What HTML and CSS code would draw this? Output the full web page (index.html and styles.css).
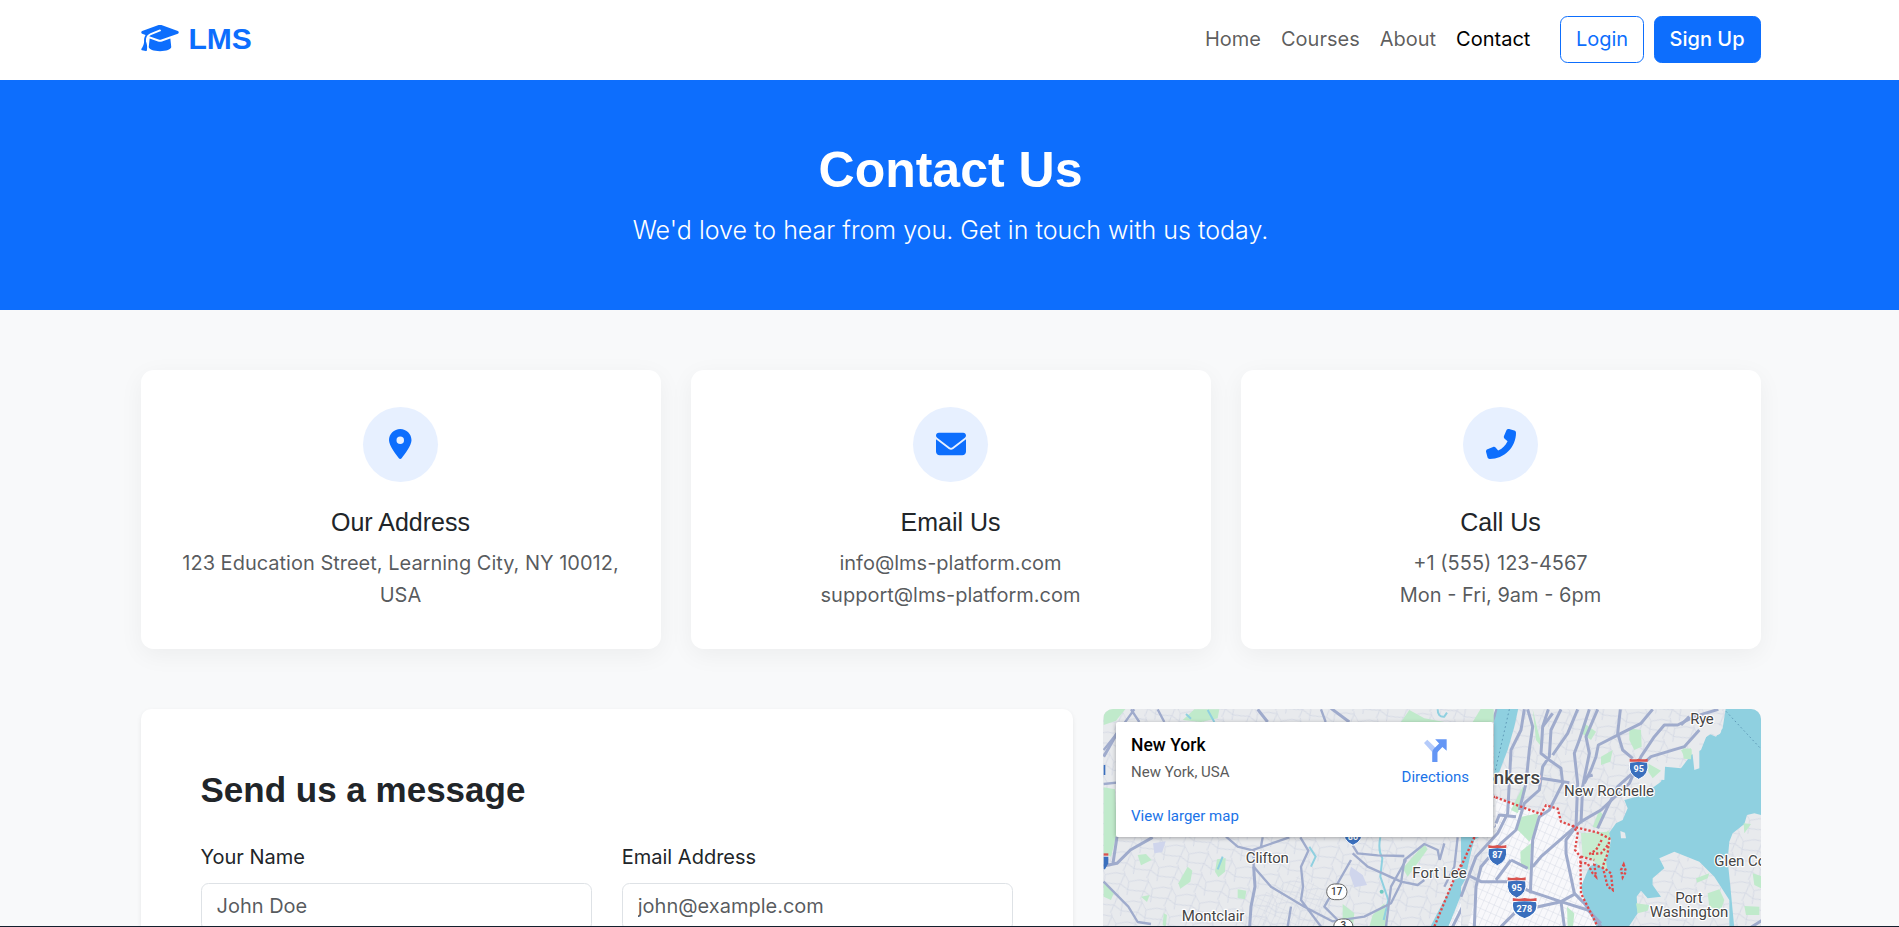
FILE: index.html
```html
<!DOCTYPE html>
<html lang="en">
<head>
<meta charset="utf-8">
<title>Contact Us - LMS</title>
<link rel="stylesheet" href="styles.css">
</head>
<body>
<header class="navbar">
  <div class="container navbar-inner">
    <a class="brand" href="#">
      <svg class="brand-icon" viewBox="0 0 640 512"><path d="M320 32c-8.1 0-16.1 1.4-23.7 4.1L15.8 137.4C6.3 140.9 0 149.9 0 160s6.3 19.1 15.8 22.6l57.9 20.9C57.3 229.3 48 259.8 48 291.9V320c0 28.4-10.8 57.7-22.3 80.8c-6.5 13-13.9 25.8-22.5 37.6C0 442.7-.9 448.3 .9 453.4s6 8.9 11.2 10.2l64 16c4.2 1.1 8.7 .3 12.4-2s6.3-6.1 7.1-10.4c8.6-42.8 4.3-81.2-2.1-108.7C90.3 344.3 86 329.8 80 316.5V291.9c0-30.2 10.2-58.7 27.9-81.5c12.9-15.5 29.6-28 49.2-35.7l157-61.7c8.2-3.2 17.5 .8 20.7 9s-.8 17.5-9 20.7l-157 61.7c-12.4 4.9-23.3 12.4-32.2 21.6l159.6 57.6c7.6 2.7 15.6 4.1 23.7 4.1s16.1-1.4 23.7-4.1L624.2 182.6c9.5-3.4 15.8-12.5 15.8-22.6s-6.3-19.1-15.8-22.6L343.7 36.1C336.1 33.4 328.1 32 320 32zM128 408c0 35.3 86 72 192 72s192-36.7 192-72L496.7 262.6 354.5 314c-11.1 4-22.8 6-34.5 6s-23.5-2-34.5-6L143.3 262.6 128 408z"/></svg>
      <span>LMS</span>
    </a>
    <nav class="nav-links">
      <a href="#">Home</a>
      <a href="#">Courses</a>
      <a href="#">About</a>
      <a class="active" href="#">Contact</a>
    </nav>
    <div class="nav-actions">
      <a class="btn btn-outline" href="#">Login</a>
      <a class="btn btn-primary" href="#">Sign Up</a>
    </div>
  </div>
</header>

<section class="hero">
  <h1>Contact Us</h1>
  <p>We'd love to hear from you. Get in touch with us today.</p>
</section>

<main class="container content">
  <div class="info-grid">
    <article class="info-card">
      <div class="info-icon"><svg viewBox="0 0 384 512"><path d="M215.7 499.2C267 435 384 279.4 384 192C384 86 298 0 192 0S0 86 0 192c0 87.4 117 243 168.3 307.2c12.3 15.3 35.1 15.3 47.4 0zM192 128a64 64 0 1 1 0 128 64 64 0 1 1 0-128z"/></svg></div>
      <h2>Our Address</h2>
      <p>123 Education Street, Learning City, NY 10012, USA</p>
    </article>
    <article class="info-card">
      <div class="info-icon"><svg viewBox="0 0 512 512"><path d="M48 64C21.5 64 0 85.5 0 112c0 15.1 7.1 29.3 19.2 38.4L236.8 313.6c11.4 8.5 27 8.5 38.4 0L492.8 150.4c12.1-9.1 19.2-23.3 19.2-38.4c0-26.5-21.5-48-48-48H48zM0 176V384c0 35.3 28.7 64 64 64H448c35.3 0 64-28.7 64-64V176L294.4 339.2c-22.8 17.1-54 17.1-76.8 0L0 176z"/></svg></div>
      <h2>Email Us</h2>
      <p>info@lms-platform.com<br>support@lms-platform.com</p>
    </article>
    <article class="info-card">
      <div class="info-icon"><svg viewBox="0 0 512 512"><path transform="matrix(-1 0 0 1 512 0)" d="M164.9 24.6c-7.7-18.6-28-28.5-47.4-23.2l-88 24C12.1 30.2 0 46 0 64C0 311.4 200.6 512 448 512c18 0 33.8-12.1 38.6-29.5l24-88c5.3-19.4-4.6-39.7-23.2-47.4l-96-40c-16.3-6.8-35.2-2.1-46.3 11.6L304.7 368C234.3 334.7 177.3 277.7 144 207.3L193.3 167c13.7-11.2 18.4-30 11.6-46.3l-40-96z"/></svg></div>
      <h2>Call Us</h2>
      <p>+1 (555) 123-4567<br>Mon - Fri, 9am - 6pm</p>
    </article>
  </div>

  <div class="contact-grid">
    <form class="form-card">
      <h3>Send us a message</h3>
      <div class="form-row">
        <label class="field"><span>Your Name</span><input type="text" placeholder="John Doe"></label>
        <label class="field"><span>Email Address</span><input type="email" placeholder="john@example.com"></label>
      </div>
    </form>

    <div class="map">
      <svg class="map-canvas" viewBox="0 0 658 218" preserveAspectRatio="xMinYMin slice">
        <defs>
          <pattern id="streets" width="74" height="66" patternUnits="userSpaceOnUse" patternTransform="rotate(17)">
            <path d="M0 12L28 8 46 26 74 12M20 66L28 8 24 0M46 26L52 66M0 46L24 40 50 50 74 46M0 46" class="street"/>
          </pattern>
          <pattern id="blocks" width="17" height="26" patternUnits="userSpaceOnUse" patternTransform="rotate(24)">
            <path d="M0 0H17M0 0V26" class="street"/>
          </pattern>
          <g id="shield">
            <path d="M-27-15Q0-21 27-15Q34 22 0 36Q-34 22-27-15Z" fill="#3a6fbd" stroke="#fff" stroke-width="3"/>
            <path d="M-27-26Q-13-22 0-26Q13-22 27-26V-17H-27Z" fill="#d9534f"/>
          </g>
        </defs>

        <g transform="translate(-12 -9) scale(.33333)">
          <rect x="30" y="20" width="1240" height="670" fill="#e8eaed"/>
          <rect x="30" y="20" width="1240" height="670" fill="url(#streets)"/>
          <path d="M480 600L640 520 720 600 700 690H480Z" fill="url(#blocks)"/>
          <g class="park">
            <path d="M38 262L72 268 78 400 60 470 38 460Z"/>
            <path d="M38 545L70 575 60 600 38 590Z"/>
            <path d="M38 25H105L75 62 38 75Z"/>
            <path d="M310 28H385L380 55 330 66 275 60Z"/>
            <path d="M955 30L1000 55 1060 66H930Z"/>
            <path d="M1170 25H1205V66H1145Z"/>
            <path d="M140 465L165 462 182 480 150 496Z"/>
            <path d="M290 500L304 512 298 545 268 566 262 550Z"/>
            <path d="M378 478L404 474 402 515 382 532 372 515Z"/>
            <path d="M440 568L466 572 462 598 440 594Z"/>
            <path d="M1000 432L1010 448 950 530 935 505Z"/>
            <path d="M755 612L790 640 786 680H755Z"/>
            <path d="M880 610L890 680H835L845 645Z"/>
            <path d="M150 590L176 585 168 606Z"/>
            <path d="M218 640L228 645 224 680 215 675Z"/>
          </g>
          <path d="M186 430L224 424 214 456 190 460ZM780 500L815 525 828 555 790 562 775 520Z" fill="#cfd5ec"/>
          <g class="creek">
            <path d="M395 470L380 508M868 412Q860 450 874 475L868 530 892 600 878 660M655 440L674 470 660 500"/>
            <path d="M1040 28Q1040 52 1060 50L1068 38M285 42L300 56M350 30L370 66"/>
          </g>
          <path d="M1215 25H1260V72L1225 190 1209 210V66Z" fill="#8fd0e0"/>
          <path d="M1147 410H1204L1168 455 1120 560 1072 680H1018L1080 560 1110 500Z" fill="#8fd0e0"/>
          <path d="M1185 430L1260 380V680H1072L1120 580Z" fill="#f5f6f9"/>
          <path d="M1185 430L1260 380V680H1072L1120 580Z" fill="url(#blocks)"/>
          <g class="road thin">
            <path d="M38 545L112 620 140 666 180 672M38 252L78 248M38 150L78 100 130 28M200 28L220 66M120 28L145 66M600 620L590 680M740 660L700 620 780 480M885 680L900 560 945 480"/>
            <path d="M405 410L440 440 488 452 488 500 540 560 640 620 724 664 820 650 900 610 930 550 940 480 1000 432 1040 450 1046 480M480 452L595 412M628 412L652 452 630 500 636 560 630 600 690 680M515 412L510 440"/>
            <path d="M785 436L800 460 860 466 940 468M785 460L830 500 930 545 980 555 1000 540M1060 430L1046 480M690 28L704 66M1100 412L1090 500 1060 560"/>
          </g>
          <g class="road">
            <path d="M38 498L78 490 118 450 185 412M78 410L66 490M78 100L38 170"/>
            <path d="M488 500L492 560 480 620 476 680M500 28L530 66M720 25L775 66M1218 28L1204 66"/>
            <path d="M1210 412L1190 450 1140 570 1085 680M1260 420L1200 500 1160 560 1155 680M1130 525L1185 542 1260 545M1209 395L1230 345H1260"/>
          </g>
          <path d="M1150 412L1088 540 1030 680" class="border"/>
          <path d="M1209 290L1260 306" class="border"/>
          <path d="M1252 28L1212 210" class="ferry"/>
          <circle cx="872" cy="575" r="6" fill="#6fc9c0"/>
          <path d="M38 470H52V490L42 508H38Z" fill="#3a6fbd"/><path d="M38 460H52V467H38Z" fill="#d9534f"/>
          <path d="M38 195H43V225H38Z" fill="#3a6fbd"/>
          <use href="#shield" x="786" y="400"/><text x="786" y="420" class="badge">80</text>
          <use href="#shield" x="1219" y="461"/><text x="1218" y="474" class="badge">87</text>
          <use href="#shield" x="1278" y="560"/>
          <g class="state">
            <rect x="707" y="552" width="61" height="47" rx="23"/><text x="737" y="584">17</text>
            <rect x="728" y="657" width="58" height="47" rx="23"/><text x="757" y="687">3</text>
          </g>
          <g class="town">
            <text x="529" y="488" textLength="129">Clifton</text>
            <text x="366" y="662" textLength="188">Montclair</text>
          </g>
        </g>

        <g transform="translate(358 -9) scale(.33333)">
          <path d="M135 20H910V690H0V560L40 420 105 380 100 210Z" fill="#e8eaed"/>
          <path d="M135 20H910V690H0V560L40 420 105 380 100 210Z" fill="url(#streets)"/>
          <path d="M104 292L240 342 255 316 290 330 300 365 345 385 360 480 370 600 410 685H20L60 520 105 400Z" fill="#f8f8fb"/>
          <path d="M104 292L240 342 255 316 290 330 300 365 345 385 360 480 370 600 410 685H20L60 520 105 400Z" fill="url(#blocks)"/>
          <path d="M110 25H172L160 80 140 150 115 215 100 225V66Z" fill="#8fd0e0"/>
          <path d="M40 411H0V560L12 540Z" fill="#8fd0e0"/>
          <g class="park">
            <path d="M182 350L232 340 222 400 205 425 165 385Z"/>
            <path d="M178 455L210 430 206 510 180 500Z"/>
            <path d="M360 400L440 395 445 440 420 490 375 460Z"/>
            <path d="M60 28H98V66H45Z"/>
            <path d="M370 70L405 95 390 120 362 100Z"/>
            <path d="M420 170L455 150 448 185 420 195Z"/>
            <path d="M505 85L540 90 542 140 520 150 505 120Z"/>
            <path d="M395 380L415 330 430 350 410 385Z"/>
            <path d="M150 330L185 260 195 270 170 340Z"/>
            <path d="M318 620L340 640 336 680H320Z"/>
            <path d="M660 150L690 145 694 180 672 175Z"/>
            <path d="M215 28L230 90 245 145 225 120Z"/>
          </g>
          <path d="M795 20H910V348L880 340 858 345 850 372 815 400 805 425 800 480 810 580 820 685H410L375 620 360 560 385 500 440 470 450 420 440 405 465 370 485 360 500 325 490 300 545 285 600 245 612 200 660 205 690 165 720 150 740 100 765 110 785 85Z" fill="#8fd0e0"/>
          <path d="M575 535L610 505 595 475 640 455 715 485 760 530 805 600 805 685H500L530 640 527 590 540 572 560 595 600 590 575 555Z" fill="#e8eaed"/>
          <path d="M575 535L610 505 595 475 640 455 715 485 760 530 805 600 805 685H500L530 640 527 590 540 572 560 595 600 590 575 555Z" fill="url(#streets)"/>
          <path d="M532 190L585 180 612 202 610 240 580 238 555 270 535 250Z" fill="#e8eaed"/>
          <path d="M690 110L750 75 752 100 715 125 715 205 700 210 695 165Z" fill="#e8eaed"/>
          <g class="park">
            <path d="M560 190L600 212 575 235 562 215ZM665 145L692 148 690 178 668 176ZM705 535L745 520 740 535 708 548ZM740 580L775 568 790 600 780 630 745 620ZM875 520L905 530 900 565 880 555ZM848 370L870 372 850 400ZM850 618L895 620 895 645 855 645ZM525 610L565 615 560 632 530 640ZM430 405L442 390 450 420Z"/>
          </g>
          <path d="M360 400L405 398 442 410 448 440 435 480 440 520 420 500 405 490 385 475 365 470Z" fill="#c7ecd0"/>
          <path d="M478 393L492 398 495 415 480 415ZM750 80Q765 60 780 82Q785 104 765 106Q748 102 750 80Z" fill="#e8eaed"/>
          <g class="road">
            <path d="M190 28L180 90 150 150 140 340 110 400 45 470 0 590M262 28L245 80 240 160 265 180 300 205 305 250 265 330 235 350 215 420 208 580M300 28L270 90 265 170 245 200 235 270 190 310 165 390 120 430 60 500 45 560 40 680"/>
            <path d="M350 28L320 100 275 165M385 28L355 120 340 160 350 250 345 380 315 420 315 460 340 580 370 610 420 680"/>
            <path d="M410 28L375 110 385 160 365 260 360 370M575 28L540 70 480 100 412 135 405 170 390 210 370 250M772 28L700 50 650 75 610 75 580 110 540 170 505 250 420 330 360 365 240 470 215 500"/>
            <path d="M200 28L215 80 205 150 195 250 175 330M478 28L470 100 485 150 515 175M685 50L660 75M715 90L670 140 570 170 470 260 440 320 410 385"/>
            <path d="M20 525L60 545 140 545 210 575 300 605 380 630 420 670M120 680L165 635 300 605 345 580M150 480L105 540M150 480L200 505M105 370L115 345 165 350M240 235L325 248M300 605L310 680M245 80L275 40M380 230L395 225"/>
          </g>
          <path d="M865 685L905 660" class="road"/>
          <path d="M145 28L100 225M795 34L903 150" class="ferry"/>
          <g class="border">
            <path d="M104 292L240 342 255 316 290 326 300 365 345 382 410 398 445 415 440 460 425 500 440 560 455 570 450 520 430 505 400 495 405 530 395 520 380 490 350 488"/>
            <path d="M335 375L350 400 342 450 358 470 360 580 380 620 410 680M422 420L405 450 385 462 420 460 445 430M360 470L400 480M488 493L495 515 485 532 480 510Z"/>
            <path d="M40 411L0 500"/>
          </g>
          <use href="#shield" x="533" y="202"/><text x="533" y="217" class="badge">95</text>
          <use href="#shield" x="109" y="461"/><text x="109" y="475" class="badge">87</text>
          <use href="#shield" x="167" y="558"/><text x="167" y="573" class="badge">95</text>
          <use href="#shield" transform="translate(191 620) scale(1.32 1)"/><text x="190" y="635" class="badge">278</text>
          <g class="town">
            <text x="723" y="72" textLength="70">Rye</text>
            <text x="444" y="289" textLength="270">New Rochelle</text>
            <text x="760" y="499" class="start">Glen Cove</text>
            <text x="684" y="608" textLength="82">Port</text>
            <text x="684" y="652" textLength="236">Washington</text>
            <text x="17" y="535" class="end" textLength="163">Fort Lee</text>
            <text x="237" y="251" class="end city">Yonkers</text>
          </g>
        </g>
      </svg>
      <aside class="place-card">
        <div class="place-info">
          <strong>New York</strong>
          <span class="place-address">New York, USA</span>
          <a href="#">View larger map</a>
        </div>
        <a class="directions" href="#">
          <svg viewBox="0 0 70 70"><path d="M0 12L10 2 37 28 27 42Z" fill="#b5cbfa"/><path d="M25 70V42Q25 35 30 30L46 14 34 1H69V36L56 24 43 38Q41 40 41 44V70Z" fill="#6496f5"/></svg>
          <span>Directions</span>
        </a>
      </aside>
    </div>
  </div>
</main>
<div class="bottom-edge"></div>
</body>
</html>
```
FILE: styles.css
```css
* { box-sizing: border-box; }
html { overflow: hidden; }
body {
  margin: 0;
  height: 927px;
  overflow: hidden;
  background: #f8f9fa;
  color: #212529;
  font-family: Inter, sans-serif;
  font-size: 20px;
  line-height: 1.6;
}
a { color: inherit; text-decoration: none; }
h1, h2, h3, p { margin: 0; }
h1, h2, h3 { font-family: "Liberation Sans", sans-serif; line-height: 1.2; }
.container { width: 1650px; margin: 0 auto; padding: 0 14px 0 16px; }

.navbar { height: 80px; background: #fff; }
.navbar-inner { display: flex; align-items: center; height: 78px; }
.brand {
  display: flex;
  align-items: center;
  gap: 10px;
  margin-right: auto;
  color: #0d6efd;
  font-family: "Liberation Sans", sans-serif;
  font-size: 30px;
  font-weight: 700;
  line-height: 46px;
}
.brand-icon { width: 38px; height: 30px; margin-bottom: 2px; fill: currentColor; }
.nav-links { display: flex; margin-right: 20px; color: rgba(0, 0, 0, .65); }
.nav-links a { padding: 0 10px; }
.nav-links .active { color: #000; }
.nav-actions { display: flex; gap: 10px; }
.btn {
  height: 47px;
  padding: 7px 15px;
  border: 1px solid #0d6efd;
  border-radius: 7.5px;
  line-height: 31px;
}
.btn-outline { padding: 7px 14.5px; color: #0d6efd; }
.btn-primary { background: #0d6efd; color: #fff; font-weight: 500; }

.hero { height: 230px; padding: 60px 0 60px 2px; background: #0d6efd; color: #fff; text-align: center; }
.hero h1 { margin-bottom: 10px; font-size: 50px; }
.hero p { font-size: 25px; font-weight: 300; }

.content { padding-top: 60px; }
.info-grid { display: grid; grid-template-columns: repeat(3, 1fr); gap: 30px; margin-bottom: 60px; }
.info-card {
  height: 279px;
  padding: 36.5px 37.5px;
  border-radius: 12.5px;
  background: #fff;
  box-shadow: 0 6px 25px rgba(0, 0, 0, .05);
  text-align: center;
}
.info-icon {
  display: flex;
  align-items: center;
  justify-content: center;
  width: 75px;
  height: 75px;
  margin: 0 auto 25px;
  border-radius: 50%;
  background: #e7f0ff;
}
.info-icon svg { height: 30px; fill: #0d6efd; }
.info-card h2 { margin-bottom: 10px; font-size: 25px; font-weight: 500; }
.info-card p { color: rgba(33, 37, 41, .75); }

.contact-grid { display: grid; grid-template-columns: 932.5px 657.5px; gap: 30px; }
.form-card {
  height: 218px;
  padding: 60px 60px 0;
  border-radius: 10px 10px 0 0;
  background: #fff;
  box-shadow: 0 2.5px 5px rgba(0, 0, 0, .075);
}
.form-card h3 { margin-bottom: 30px; font-size: 35px; }
.form-row { display: grid; grid-template-columns: 1fr 1fr; gap: 30px; }
.field { display: flex; flex-direction: column; gap: 10px; }
.field input {
  width: 100%;
  height: 47.5px;
  padding: 6.5px 15px 8.5px;
  border: 1px solid #dee2e6;
  border-radius: 7.5px;
  background: #fff;
  font: inherit;
}
.field input::placeholder { color: rgba(33, 37, 41, .75); opacity: 1; }

.map { position: relative; height: 218px; overflow: hidden; border-radius: 10px 10px 0 0; }
.map-canvas { display: block; width: 658px; height: 218px; }
.street { fill: none; stroke: #d3d8e3; stroke-width: 2.5; }
.park { fill: #c0eacb; }
.creek { fill: none; stroke: #8fd0e0; stroke-width: 6; }
.road { fill: none; stroke: #9fabcc; stroke-width: 9; stroke-linejoin: round; }
.road.thin { stroke-width: 7; }
.border { fill: none; stroke: #e04848; stroke-width: 7; stroke-dasharray: 7 6; }
.ferry { fill: none; stroke: #5f9bb8; stroke-width: 3; stroke-dasharray: 5 8; }
.badge { fill: #fff; font: 700 27px Roboto, sans-serif; text-anchor: middle; }
.state rect { fill: #fff; stroke: #666; stroke-width: 3; }
.state text { fill: #444; font: 500 30px Roboto, sans-serif; text-anchor: middle; }
.town text {
  fill: #444;
  stroke: #fff;
  stroke-width: 7;
  stroke-linejoin: round;
  paint-order: stroke;
  font: 400 45px Roboto, sans-serif;
  text-anchor: middle;
}
.town .start { text-anchor: start; }
.town .end { text-anchor: end; }
.town .city { font-weight: 500; font-size: 56px; }

.place-card {
  position: absolute;
  top: 13px;
  left: 13px;
  display: flex;
  justify-content: space-between;
  width: 377px;
  height: 115px;
  padding: 13px 24px 0 15px;
  border-radius: 2px;
  background: #fff;
  box-shadow: 0 1px 4px rgba(0, 0, 0, .3);
  font-family: Roboto, sans-serif;
  font-size: 15px;
  line-height: 20px;
}
.place-card a { color: #1a73e8; }
.place-info { display: flex; flex-direction: column; }
.place-info strong { color: #000; font-size: 17.5px; font-weight: 500; }
.place-address { margin: 7px 0 24px; color: #5b5b5b; }
.directions { display: flex; flex-direction: column; align-items: center; gap: 5px; padding-top: 4px; }
.directions svg { width: 23px; height: 23px; }

.bottom-edge { position: fixed; left: 0; right: 0; bottom: 0; height: 1px; background: #14202e; }
```
